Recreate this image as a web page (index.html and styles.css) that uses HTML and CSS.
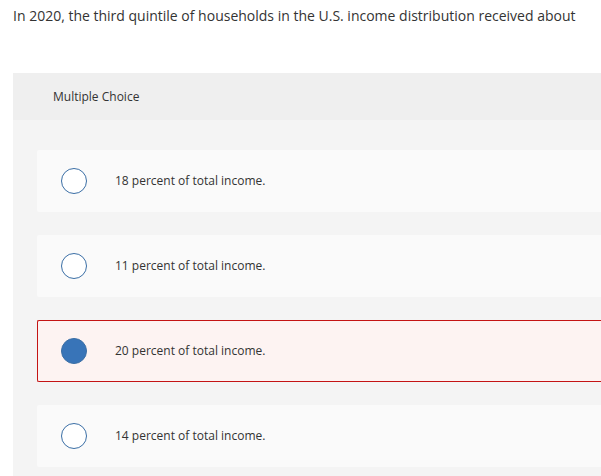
FILE: index.html
```html
<!DOCTYPE html>
<html lang="en">
<head>
    <meta charset="UTF-8">
    <title>Multiple Choice</title>
    <link rel="stylesheet" href="styles.css">
</head>
<body>
    <div class="question">
        <p class="question-text">In 2020, the third quintile of households in the U.S. income distribution received about</p>
    </div>

    <section class="choice-panel">
        <div class="panel-header">Multiple Choice</div>

        <div class="options">
            <label class="option">
                <span class="radio"></span>
                <span class="option-text">18 percent of total income.</span>
            </label>
            <label class="option">
                <span class="radio"></span>
                <span class="option-text">11 percent of total income.</span>
            </label>
            <label class="option selected">
                <span class="radio checked"></span>
                <span class="option-text">20 percent of total income.</span>
            </label>
            <label class="option">
                <span class="radio"></span>
                <span class="option-text">14 percent of total income.</span>
            </label>
        </div>
    </section>
</body>
</html>
```

FILE: styles.css
```css
:root {
    --text: #333333;
    --panel: #f4f4f4;
    --panel-head: #efefef;
    --card: #fafafa;
    --radio: #3a6ea5;
    --radio-fill: #3874b8;
    --wrong: #c41414;
    --wrong-bg: #fdf3f2;
}

* {
    margin: 0;
    padding: 0;
    box-sizing: border-box;
}

html, body {
    height: 100%;
}

body {
    font-family: "Open Sans", Lato, sans-serif;
    color: var(--text);
    background: #ffffff;
    overflow: hidden;
}

/* Question */
.question {
    height: 73px;
    padding: 6px 13px 0;
}

.question-text {
    font-size: 14px;
    line-height: 20px;
    white-space: nowrap;
}

/* Panel */
.choice-panel {
    margin-left: 13px;
    height: calc(100% - 73px);
    background: var(--panel);
}

.panel-header {
    height: 47px;
    padding-left: 40px;
    display: flex;
    align-items: center;
    font-size: 12px;
    background: var(--panel-head);
}

.options {
    display: flex;
    flex-direction: column;
    gap: 23px;
    padding: 30px 0 0 24px;
}

.option {
    height: 62px;
    display: flex;
    align-items: center;
    gap: 28px;
    padding-left: 23px;
    background: var(--card);
    border: 1px solid transparent;
    border-right: none;
    border-radius: 2px 0 0 2px;
}

.option.selected {
    background: var(--wrong-bg);
    border-color: var(--wrong);
}

.radio {
    width: 26px;
    height: 26px;
    border-radius: 50%;
    border: 1px solid var(--radio);
    background: #ffffff;
    flex-shrink: 0;
}

.radio.checked {
    background: var(--radio-fill);
}

.option-text {
    font-size: 12px;
    line-height: 16px;
    margin-top: -1px;
}
```
